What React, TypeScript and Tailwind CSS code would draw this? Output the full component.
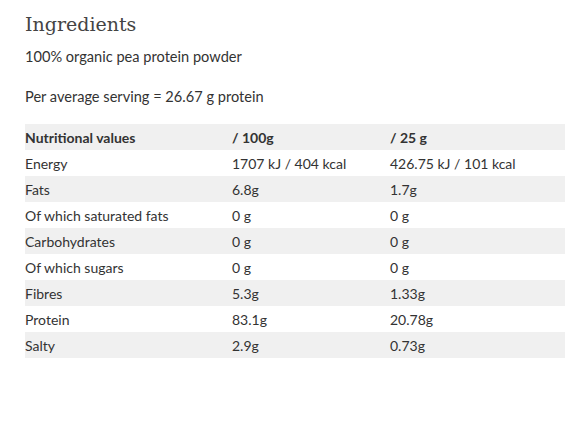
const rows: [string, string, string][] = [
  ["Energy", "1707 kJ / 404 kcal", "426.75 kJ / 101 kcal"],
  ["Fats", "6.8g", "1.7g"],
  ["Of which saturated fats", "0 g", "0 g"],
  ["Carbohydrates", "0 g", "0 g"],
  ["Of which sugars", "0 g", "0 g"],
  ["Fibres", "5.3g", "1.33g"],
  ["Protein", "83.1g", "20.78g"],
  ["Salty", "2.9g", "0.73g"],
];

export default function App() {
  return (
    <div className="h-[423px] w-[585px] bg-white px-[25px] pt-[10px] text-[#333] [font-family:Lato,'Open_Sans',sans-serif]">
      <h2 className="text-[19px] leading-[28px] font-normal text-[#444] [font-family:'DejaVu_Serif',serif]">
        Ingredients
      </h2>
      <p className="mt-[9px] text-[14.6px] leading-[20px]">100% organic pea protein powder</p>
      <p className="mt-[20px] text-[14.6px] leading-[20px]">Per average serving = 26.67 g protein</p>

      <div className="mt-[17px] w-[540px] text-[14px]">
        <div className="grid h-[26px] grid-cols-[207px_158px_175px] items-center bg-[#f0f0f0] font-bold">
          <span>Nutritional values</span>
          <span>/ 100g</span>
          <span>/ 25 g</span>
        </div>
        {rows.map(([name, a, b], i) => (
          <div
            key={name}
            className={`grid h-[26px] grid-cols-[207px_158px_175px] items-center ${
              i % 2 === 1 ? "bg-[#f0f0f0]" : "bg-white"
            }`}
          >
            <span>{name}</span>
            <span>{a}</span>
            <span>{b}</span>
          </div>
        ))}
      </div>
    </div>
  );
}
